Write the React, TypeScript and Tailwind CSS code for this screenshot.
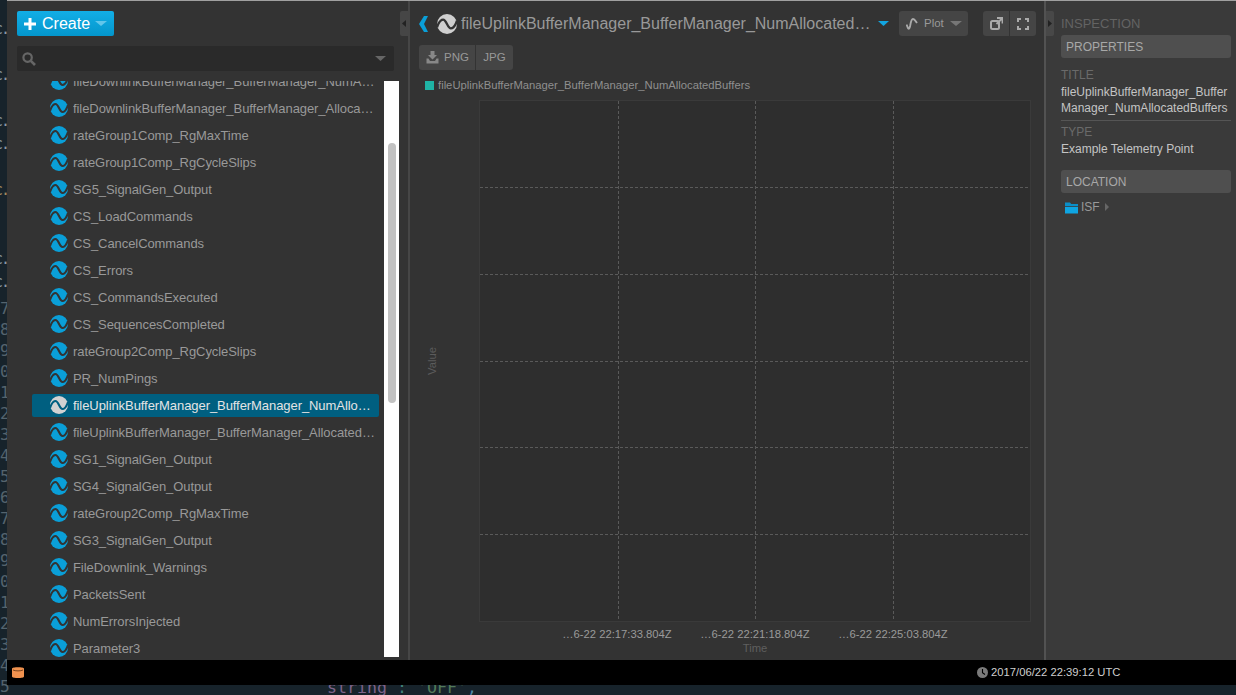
import React from "react";

const rows = [
  "fileDownlinkBufferManager_BufferManager_NumAllocatedBuffers",
  "fileDownlinkBufferManager_BufferManager_AllocatedBuffers",
  "rateGroup1Comp_RgMaxTime",
  "rateGroup1Comp_RgCycleSlips",
  "SG5_SignalGen_Output",
  "CS_LoadCommands",
  "CS_CancelCommands",
  "CS_Errors",
  "CS_CommandsExecuted",
  "CS_SequencesCompleted",
  "rateGroup2Comp_RgCycleSlips",
  "PR_NumPings",
  "fileUplinkBufferManager_BufferManager_NumAllocatedBuffers",
  "fileUplinkBufferManager_BufferManager_AllocatedBuffers",
  "SG1_SignalGen_Output",
  "SG4_SignalGen_Output",
  "rateGroup2Comp_RgMaxTime",
  "SG3_SignalGen_Output",
  "FileDownlink_Warnings",
  "PacketsSent",
  "NumErrorsInjected",
  "Parameter3",
  "Parameter4",
];

function Wave({ size = 18, fill = "#0a9fd8", stroke = "#333333" }: { size?: number; fill?: string; stroke?: string }) {
  return (
    <svg width={size} height={size} viewBox="0 0 18 18" className="shrink-0">
      <circle cx="9" cy="9" r="9" fill={fill} />
      <path d="M0 12C1.5 7.5 3.5 5 5.5 5C8.5 5 9.5 13 12.5 13C14.5 13 16.5 10.5 18 6" fill="none" stroke={stroke} strokeWidth="2.1" />
    </svg>
  );
}

function Tri({ color, w = 11, h = 5 }: { color: string; w?: number; h?: number }) {
  return (
    <svg width={w} height={h} viewBox="0 0 10 5" preserveAspectRatio="none" className="shrink-0">
      <path d="M0 0H10L5 5Z" fill={color} />
    </svg>
  );
}

function SectionBar({ label }: { label: string }) {
  return <div className="h-[23px] rounded-[3px] bg-[#4f4f4f] pl-[5px] text-[12px] leading-[24px] text-[#a8a8a8]">{label}</div>;
}

const topMarks = [
  { t: "c.", c: "text-[#8b99a3]" },
  { t: "", c: "" },
  { t: "c.", c: "text-[#8b99a3]" },
  { t: "", c: "" },
  { t: "c.", c: "text-[#8b99a3]" },
  { t: "c.", c: "text-[#8b99a3]" },
  { t: "", c: "" },
  { t: "c.", c: "text-[#a08a60]" },
  { t: "", c: "" },
  { t: "", c: "" },
  { t: "c.", c: "text-[#8b99a3]" },
  { t: "c.", c: "text-[#8b99a3]" },
];
const nums = ["7", "8", "9", "0", "1", "2", "3", "4", "5", "6", "7", "8", "9", "0", "1", "2", "3", "4", "5"];

export default function App() {
  return (
    <div className="relative h-[695px] w-[1236px] overflow-hidden bg-[#17232b] font-['Liberation_Sans',Arial,sans-serif]">
      {/* editor behind the window */}
      <div className="flex h-full font-['DejaVu_Sans_Mono',monospace]">
        <div className="w-[320px] shrink-0 pt-[18px]">
          {topMarks.map((m, i) => (
            <div key={i} className={`-ml-[6px] h-[23px] text-[15px] leading-[23px] tracking-[-2px] ${m.c}`}>{m.t}</div>
          ))}
          <div className="h-[4px]" />
          {nums.map((n, i) => (
            <div key={i} className="h-[21px] text-[16px] leading-[21px] text-[#55646e]">{n}</div>
          ))}
        </div>
        <div className="flex flex-col justify-end pl-[7px]">
          <div className="mb-[-3px] whitespace-pre text-[16.6px] leading-[20px]">
            <span className="text-[#7d648a]">string</span>
            <span className="text-[#3f7f7a]"> : </span>
            <span className="text-[#527a5a]">'OFF'</span>
            <span className="text-[#4f87a8]">,</span>
          </div>
        </div>
      </div>

      {/* app window */}
      <div className="absolute left-[7px] top-0 flex h-[685px] w-[1229px] flex-col border-t border-[#a0a0a0] bg-[#333333]">
        <div className="flex h-[659px] min-h-0">
          {/* left pane */}
          <div className="relative w-[401px] shrink-0 pl-[10px] pt-[10px]">
            <button className="flex h-[25px] w-[97px] items-center rounded-[2px] bg-gradient-to-b from-[#12aee6] to-[#0496cc] pl-[7px] text-[16px] text-white">
              <svg width="12" height="12" viewBox="0 0 12 12" className="mr-[6px]">
                <path d="M4.5 0H7.5V4.5H12V7.5H7.5V12H4.5V7.5H0V4.5H4.5Z" fill="#ffffff" />
              </svg>
              <span>Create</span>
              <span className="ml-[5px]"><Tri color="#62c6ea" w={12} h={5} /></span>
            </button>
            <div className="mt-[10px] flex h-[25px] w-[377px] items-center justify-between rounded-[2px] bg-[#2a2a2a] pl-[5px] pr-[8px]">
              <svg width="14" height="14" viewBox="0 0 14 14">
                <circle cx="5.6" cy="5.6" r="4.2" fill="none" stroke="#666666" strokeWidth="2.2" />
                <path d="M8.8 8.8L13 13" stroke="#666666" strokeWidth="2.6" />
              </svg>
              <Tri color="#666666" w={11} h={5} />
            </div>
            <div className="mt-[10px] flex h-[576px] overflow-hidden">
              <div className="-mt-[11px] ml-[15px] w-[347px] shrink-0">
                {rows.map((r, i) => {
                  const sel = i === 12;
                  return (
                    <div key={i} className={`mb-[4px] flex h-[23px] items-center rounded-[2px] pl-[18px] pr-[2px] text-[13px] tracking-[-0.07px] ${sel ? "bg-[#005f80] text-[#e4e4e4]" : "text-[#999999]"}`}>
                      <span className="-mt-[1px] flex">{sel ? <Wave fill="#d2d2d2" stroke="#005f80" /> : <Wave />}</span>
                      <span className="ml-[5px] min-w-0 flex-1 truncate">{r}</span>
                    </div>
                  );
                })}
              </div>
              <div className="ml-[5px] w-[15px] shrink-0 bg-white">
                <div className="ml-[4px] mt-[62px] h-[260px] w-[8px] rounded-[4px] bg-[#c2c2c2]" />
              </div>
            </div>
            <div className="absolute left-[393px] top-[10px] flex h-[25px] w-[8px] items-center justify-center rounded-l-[2px] bg-[#464646]">
              <svg width="4" height="7" viewBox="0 0 4 7"><path d="M4 0V7L0 3.5Z" fill="#222222" /></svg>
            </div>
          </div>
          <div className="w-[2px] shrink-0 bg-[#464646]" />

          {/* centre pane */}
          <div className="w-[634px] shrink-0">
            <div className="mt-[10px] flex h-[25px] items-center pl-[9px]">
              <svg width="9" height="16" viewBox="0 0 9 16" className="shrink-0">
                <path d="M5 0H9L5 8L9 16H5L0 8Z" fill="#0a9fd8" />
              </svg>
              <span className="ml-[9px]"><Wave size={20} fill="#cfcfcf" stroke="#333333" /></span>
              <span className="ml-[4px] w-[411px] truncate text-[16px] text-[#999999]">fileUplinkBufferManager_BufferManager_NumAllocatedBuffers</span>
              <span className="ml-[6px]"><Tri color="#12a5e0" w={11} h={5} /></span>
              <button className="ml-[10px] flex h-[25px] w-[69px] items-center rounded-[3px] bg-[#454545] pl-[7px] text-[11.5px] text-[#999999]">
                <svg width="12" height="12" viewBox="0 0 12 12" className="shrink-0">
                  <path d="M0.5 6.5L2 10C2.8 11.5 3.6 10.5 4.2 7.5C4.8 4 5.4 1 7 1C8.6 1 9.4 2.8 11 5" fill="none" stroke="#aaaaaa" strokeWidth="1.9" />
                </svg>
                <span className="ml-[6px]">Plot</span>
                <span className="ml-[6px]"><Tri color="#777777" w={12} h={5} /></span>
              </button>
              <div className="ml-[15px] flex gap-[1px]">
                <button className="flex h-[25px] w-[26px] items-center justify-center rounded-l-[3px] bg-[#454545]">
                  <svg width="13" height="13" viewBox="0 0 13 13">
                    <rect x="1" y="4" width="8" height="8" rx="1.5" fill="none" stroke="#aaaaaa" strokeWidth="2" />
                    <path d="M7 1H12.5V6.5M12 1.5L6.5 7" fill="none" stroke="#aaaaaa" strokeWidth="1.8" />
                  </svg>
                </button>
                <button className="flex h-[25px] w-[26px] items-center justify-center rounded-r-[3px] bg-[#454545]">
                  <svg width="12" height="12" viewBox="0 0 12 12">
                    <path d="M1 4V1H4M8 1H11V4M11 8V11H8M4 11H1V8" fill="none" stroke="#aaaaaa" strokeWidth="2" />
                  </svg>
                </button>
              </div>
            </div>
            <div className="ml-[9px] mt-[9px] flex gap-[1px]">
              <button className="flex h-[25px] w-[56px] items-center rounded-l-[3px] bg-[#454545] pl-[7px] text-[11.5px] text-[#999999]">
                <svg width="13" height="13" viewBox="0 0 13 13" className="shrink-0">
                  <path d="M4.5 0H8.5V4H11L6.5 8.5L2 4H4.5Z" fill="#888888" />
                  <path d="M0.5 7.5V12.5H12.5V7.5H10.5L9 10H4L2.5 7.5Z" fill="#888888" />
                </svg>
                <span className="ml-[5px] pt-[1px]">PNG</span>
              </button>
              <button className="h-[25px] w-[37px] rounded-r-[3px] bg-[#454545] text-center text-[11.5px] text-[#999999]">JPG</button>
            </div>
            <div className="ml-[15px] mt-[9px] flex h-[12px] items-center text-[11.25px] leading-[12px] text-[#8f8f8f]">
              <span className="h-[9px] w-[9px] bg-[#1fb3a5]" />
              <span className="ml-[4px]">fileUplinkBufferManager_BufferManager_NumAllocatedBuffers</span>
            </div>
            <div className="mt-[9px] flex h-[522px]">
              <div className="flex w-[69px] shrink-0 items-center justify-start pl-[16px]">
                <span className="rotate-180 text-[11.25px] leading-[12px] text-[#5c5c5c] [writing-mode:vertical-rl]">Value</span>
              </div>
              <div className="h-[522px] w-[552px] shrink-0 border border-[#3a3a3a] bg-[#2e2e2e]">
                <svg width="550" height="520" className="block">
                  {[86.5, 173.5, 260.5, 346.5, 433.5].map((y) => (
                    <line key={y} x1="0" x2="550" y1={y} y2={y} stroke="#5a5a5a" strokeDasharray="3 2" />
                  ))}
                  {[138.5, 275.5, 413.5].map((x) => (
                    <line key={x} y1="0" y2="520" x1={x} x2={x} stroke="#5a5a5a" strokeDasharray="3 2" />
                  ))}
                </svg>
              </div>
            </div>
            <div className="ml-[138px] mt-[5px] flex text-[11.25px] leading-[14px] text-[#9a9a9a]">
              {["…6-22 22:17:33.804Z", "…6-22 22:21:18.804Z", "…6-22 22:25:03.804Z"].map((t) => (
                <div key={t} className="w-[138px] shrink-0 text-center">{t}</div>
              ))}
            </div>
            <div className="ml-[276px] w-[138px] text-center text-[11.25px] leading-[14px] text-[#5f5f5f]">Time</div>
          </div>
          <div className="w-[2px] shrink-0 bg-[#525252]" />

          {/* right pane */}
          <div className="relative min-w-0 flex-1 bg-[#3a3a3a] pl-[15px] pr-[5px]">
            <div className="absolute left-0 top-[10px] flex h-[25px] w-[8px] items-center justify-center rounded-r-[2px] bg-[#484848]">
              <svg width="4" height="7" viewBox="0 0 4 7"><path d="M0 0V7L4 3.5Z" fill="#222222" /></svg>
            </div>
            <div className="pt-[15px] text-[13px] leading-[15px] text-[#636363]">INSPECTION</div>
            <div className="mt-[4px]"><SectionBar label="PROPERTIES" /></div>
            <div className="mt-[9px] text-[12px] leading-[16px] text-[#6a6a6a]">TITLE</div>
            <div className="break-all pt-[1px] text-[12px] leading-[16px] text-[#c4c4c4]">fileUplinkBufferManager_BufferManager_NumAllocatedBuffers</div>
            <div className="mt-[4px] border-t border-[#555555]" />
            <div className="mt-[3px] text-[12px] leading-[16px] text-[#6a6a6a]">TYPE</div>
            <div className="pt-[1px] text-[12px] leading-[16px] text-[#c4c4c4]">Example Telemetry Point</div>
            <div className="mt-[13px]"><SectionBar label="LOCATION" /></div>
            <div className="mt-[6px] flex h-[16px] items-center pl-[4px] text-[12px] text-[#999999]">
              <svg width="13" height="13" viewBox="0 0 13 13" className="shrink-0">
                <path d="M0 1.5H5L6.2 3H13V5H0Z" fill="#0a8fc8" />
                <path d="M0 5.8H13V12.5H0Z" fill="#0fa5e2" />
              </svg>
              <span className="ml-[3px]">ISF</span>
              <svg width="4" height="8" viewBox="0 0 4 8" className="ml-[5px]"><path d="M0 0V8L4 4Z" fill="#666666" /></svg>
            </div>
          </div>
        </div>

        {/* status bar */}
        <div className="flex h-[25px] shrink-0 items-center bg-black pl-[5px] text-[11.25px] text-[#cfcfcf]">
          <svg width="12" height="13" viewBox="0 0 12 13" className="shrink-0">
            <path d="M0 2.5C0 0.8 12 0.8 12 2.5V10.5C12 12.6 0 12.6 0 10.5Z" fill="#f0924f" />
            <path d="M1 4C3 5.2 9 5.2 11 4" fill="none" stroke="#5a2f10" strokeWidth="0.8" />
          </svg>
          <svg width="11" height="11" viewBox="0 0 11 11" className="ml-[953px] shrink-0">
            <circle cx="5.5" cy="5.5" r="5.5" fill="#7a7a7a" />
            <path d="M5.5 2V5.8L8 7.5" fill="none" stroke="#000000" strokeWidth="1.1" />
          </svg>
          <span className="ml-[3px]">2017/06/22 22:39:12 UTC</span>
        </div>
      </div>
    </div>
  );
}
